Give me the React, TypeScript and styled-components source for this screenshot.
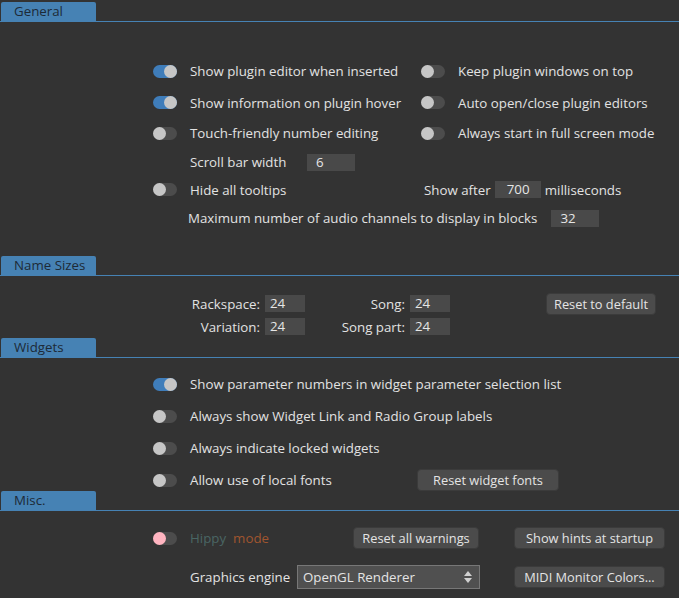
import React from 'react';
import styled, {createGlobalStyle} from 'styled-components';

const GlobalStyle = createGlobalStyle`
  html, body {
    margin: 0;
    padding: 0;
    background: #333333;
  }
  body {
    font-family: "Open Sans", "Noto Sans", sans-serif;
    font-size: 13.3px;
    color: #e2e2e2;
  }
`;

const Page = styled.div`
  width: 679px;
  height: 598px;
  overflow: hidden;
  padding-top: 2px;
  box-sizing: border-box;
  background: #333333;
`;

const HeaderBar = styled.div`
  height: 19px;
  border-bottom: 1px solid #4682b4;
  display: flex;
`;

const Tab = styled.div`
  width: 82px;
  margin-left: 1px;
  padding-left: 13px;
  background: #4682b4;
  color: #1d2a37;
  font-size: 13.3px;
  line-height: 19px;
  border-radius: 2px 2px 0 0;
`;

const Header = ({title}: { title: string }) => (
    <HeaderBar><Tab>{title}</Tab></HeaderBar>
);

// toggles
const Track = styled.span<{ $on?: boolean }>`
  position: relative;
  flex: none;
  width: 24px;
  height: 13px;
  border-radius: 7px;
  background: ${p => p.$on ? '#3f7dba' : '#4c4c4c'};
`;

const Knob = styled.span<{ $on?: boolean, $color?: string }>`
  position: absolute;
  top: 0;
  left: ${p => p.$on ? '11px' : '0'};
  width: 13px;
  height: 13px;
  border-radius: 50%;
  background: ${p => p.$color || '#c6c6c6'};
`;

const Toggle = ({on, color}: { on?: boolean, color?: string }) => (
    <Track $on={on}><Knob $on={on} $color={color}/></Track>
);

const Item = styled.div<{ $w?: number }>`
  display: flex;
  align-items: center;
  gap: 13px;
  white-space: nowrap;
  ${p => p.$w ? `width: ${p.$w}px; flex: none;` : ''}
`;

const Option = ({label, on, w}: { label: string, on?: boolean, w?: number }) => (
    <Item $w={w}><Toggle on={on}/><span>{label}</span></Item>
);

const NumBox = styled.div<{ $w?: number, $pl?: number }>`
  width: ${p => p.$w || 48}px;
  height: 17px;
  box-sizing: border-box;
  padding-left: ${p => p.$pl ?? 9}px;
  background: #494949;
  color: #e6e6e6;
  line-height: 17px;
  flex: none;
`;

const Field = styled.div<{ $pl?: number, $gap?: number }>`
  display: flex;
  align-items: center;
  gap: ${p => p.$gap ?? 5}px;
  padding-left: ${p => p.$pl || 0}px;
  white-space: nowrap;
`;

const FieldLabel = styled.span<{ $w?: number }>`
  ${p => p.$w ? `width: ${p.$w}px;` : ''}
  flex: none;
`;

const Button = styled.button<{ $w: number }>`
  width: ${p => p.$w}px;
  height: 22px;
  padding: 0;
  border: 1px solid #3b3b3b;
  border-radius: 4px;
  background: #4b4b4b;
  color: #e4e4e4;
  font-family: "Open Sans", "Noto Sans", sans-serif;
  font-size: 12.8px;
  line-height: 20px;
  white-space: nowrap;
`;

// General
const GeneralGrid = styled.div`
  display: grid;
  grid-template-columns: 268px 1fr;
  grid-template-rows: 32px 31px 30px 28px 27px 30px;
  align-items: center;
  padding: 33px 0 23px 153px;
`;

const Wide = styled.div`
  grid-column: 1 / -1;
`;

// Name sizes
const SizesGrid = styled.div`
  display: grid;
  grid-template-columns: 70px 40px 95px 40px 1fr;
  grid-template-rows: 23px 23px;
  column-gap: 5px;
  align-items: center;
  padding: 16px 0 0 190px;
`;

const SizeLabel = styled.span`
  text-align: right;
  white-space: nowrap;
`;

const SizeBox = styled.div`
  height: 17px;
  padding-left: 5px;
  background: #494949;
  color: #e6e6e6;
  line-height: 17px;
`;

const ResetCell = styled.div`
  padding-left: 91px;
`;

// Widgets
const WidgetList = styled.div`
  display: flex;
  flex-direction: column;
  gap: 10px;
  padding: 15px 0 0 153px;
`;

const WidgetRow = styled.div`
  display: flex;
  align-items: center;
  height: 22px;
`;

// Misc
const MiscGrid = styled.div`
  display: grid;
  grid-template-columns: 37px 107px 56px 127px 34px 151px;
  grid-template-rows: 22px 24px;
  row-gap: 16px;
  align-items: center;
  padding: 16px 0 0 153px;
`;

const HippyCell = styled.div`
  grid-column: 1 / 4;
  display: flex;
  align-items: center;
  gap: 13px;
`;

const Hippy = styled.span`
  color: #4a6664;
  margin-right: 7px;
`;

const Mode = styled.span`
  color: #a0552f;
`;

const Select = styled.div`
  grid-column: 3 / 5;
  height: 24px;
  box-sizing: border-box;
  border: 1px solid #777777;
  background: #505050;
  display: flex;
  align-items: center;
  justify-content: space-between;
  padding: 0 7px 0 5px;
  color: #e4e4e4;
`;

const Col = styled.div<{ $c: number }>`
  grid-column: ${p => p.$c};
  white-space: nowrap;
`;

const Arrows = () => (
    <svg width="8" height="12" viewBox="0 0 8 12">
        <path d="M4 0 L8 5 H0 Z" fill="#d0d0d0"/>
        <path d="M0 7 H8 L4 12 Z" fill="#d0d0d0"/>
    </svg>
);

export default function App() {
    return (
        <Page>
            <GlobalStyle/>
            <Header title="General"/>
            <GeneralGrid>
                <Option on label="Show plugin editor when inserted"/>
                <Option label="Keep plugin windows on top"/>
                <Option on label="Show information on plugin hover"/>
                <Option label="Auto open/close plugin editors"/>
                <Option label="Touch-friendly number editing"/>
                <Option label="Always start in full screen mode"/>
                <Field $pl={37} $gap={0}>
                    <FieldLabel $w={117}>Scroll bar width</FieldLabel>
                    <NumBox>6</NumBox>
                </Field>
                <div/>
                <Option label="Hide all tooltips"/>
                <Field $pl={3} $gap={4}>
                    <FieldLabel>Show after</FieldLabel>
                    <NumBox $w={46} $pl={12}>700</NumBox>
                    <FieldLabel>milliseconds</FieldLabel>
                </Field>
                <Wide>
                    <Field $pl={35} $gap={14}>
                        <FieldLabel>Maximum number of audio channels to display in blocks</FieldLabel>
                        <NumBox>32</NumBox>
                    </Field>
                </Wide>
            </GeneralGrid>

            <Header title="Name Sizes"/>
            <SizesGrid>
                <SizeLabel>Rackspace:</SizeLabel>
                <SizeBox>24</SizeBox>
                <SizeLabel>Song:</SizeLabel>
                <SizeBox>24</SizeBox>
                <ResetCell><Button $w={110}>Reset to default</Button></ResetCell>
                <SizeLabel>Variation:</SizeLabel>
                <SizeBox>24</SizeBox>
                <SizeLabel>Song part:</SizeLabel>
                <SizeBox>24</SizeBox>
            </SizesGrid>

            <Header title="Widgets"/>
            <WidgetList>
                <WidgetRow><Option on label="Show parameter numbers in widget parameter selection list"/></WidgetRow>
                <WidgetRow><Option label="Always show Widget Link and Radio Group labels"/></WidgetRow>
                <WidgetRow><Option label="Always indicate locked widgets"/></WidgetRow>
                <WidgetRow>
                    <Option w={264} label="Allow use of local fonts"/>
                    <Button $w={142}>Reset widget fonts</Button>
                </WidgetRow>
            </WidgetList>

            <Header title="Misc."/>
            <MiscGrid>
                <HippyCell>
                    <Toggle color="#ffb4c0"/>
                    <span><Hippy>Hippy</Hippy><Mode>mode</Mode></span>
                </HippyCell>
                <Col $c={4}><Button $w={126}>Reset all warnings</Button></Col>
                <Col $c={6}><Button $w={151}>Show hints at startup</Button></Col>
                <Col $c={2}>Graphics engine</Col>
                <Select><span>OpenGL Renderer</span><Arrows/></Select>
                <Col $c={6}><Button $w={151}>MIDI Monitor Colors...</Button></Col>
            </MiscGrid>
        </Page>
    );
}
